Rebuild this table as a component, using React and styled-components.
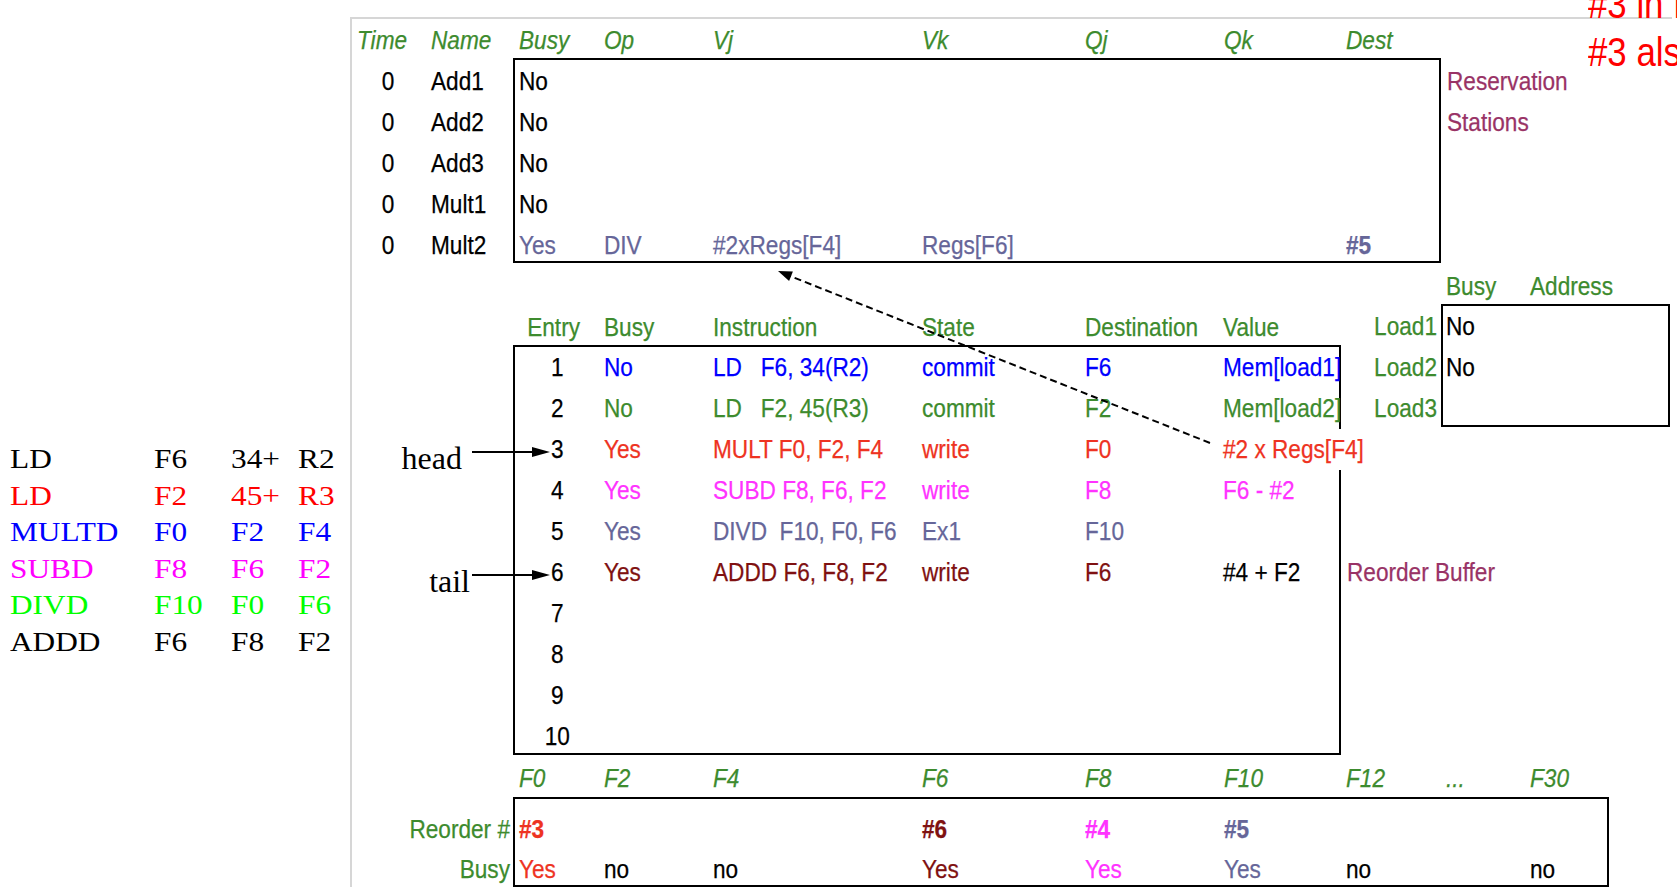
import React from 'react';
import styled, { createGlobalStyle } from 'styled-components';

const C = {
  green: '#3d8b2e',
  plum: '#993366',
  slate: '#666699',
  blue: '#0000ff',
  red: '#ee3322',
  magenta: '#ff33ff',
  maroon: '#7f1111',
  black: '#000000',
  grey: '#d6d6d6',
};

const BOXCOLS = '85px 109px 209px 163px 139px 122px 93px';
const ROBCOLS = '89px 109px 209px 163px 138px 116px';
const REGCOLS = '85px 109px 209px 163px 139px 122px 100px 84px 1fr';

const Global = createGlobalStyle`
  html, body { margin: 0; padding: 0; background: #fff; }
  body { font-family: "Liberation Sans", Arial, sans-serif; }
`;

const Page = styled.div`
  position: relative;
  width: 1677px;
  height: 896px;
  overflow: hidden;
  display: flex;
  align-items: flex-start;
  background: #fff;
  font-family: "Liberation Sans", Arial, sans-serif;
  font-size: 26px;
  color: #000;
`;

const ProgramList = styled.div`
  width: 350px;
  flex-shrink: 0;
  box-sizing: border-box;
  padding: 441px 0 0 10px;
  display: grid;
  grid-template-columns: 144px 77px 67px auto;
  grid-auto-rows: 36.6px;
  font-family: "Liberation Serif", "Times New Roman", serif;
  font-size: 27px;
  line-height: 36.6px;
`;

const ProgCell = styled.div`
  color: ${(p) => p.$c};
  white-space: nowrap;
  transform: scaleX(1.16);
  transform-origin: left center;
`;

const Panel = styled.div`
  margin-top: 17px;
  width: 1322px;
  height: 870px;
  flex-shrink: 0;
  box-sizing: border-box;
  border-top: 2px solid ${C.grey};
  border-left: 2px solid ${C.grey};
  display: flex;
  flex-direction: column;
  -webkit-text-stroke: 0.25px currentColor;
`;

/* narrow, tall text cell used everywhere in the tables */
const Cell = styled.div`
  color: ${(p) => p.$c || 'inherit'};
  font-weight: ${(p) => (p.$bold ? 700 : 400)};
  text-align: ${(p) => p.$align || 'left'};
  white-space: pre;
  transform: scaleX(0.87);
  transform-origin: ${(p) => p.$align || 'left'} center;
`;

/* ---------- Reservation stations ---------- */
const RSHeader = styled.div`
  margin-top: 4px;
  height: 35px;
  line-height: 35px;
  padding-left: 5px;
  display: grid;
  grid-template-columns: 74px 88px ${BOXCOLS};
  font-style: italic;
  color: ${C.green};
`;

const Row = styled.div`
  display: flex;
  align-items: flex-start;
  height: ${(p) => p.$h}px;
`;

const RSNames = styled.div`
  width: 161px;
  flex-shrink: 0;
  box-sizing: border-box;
  padding: 3px 0 0 5px;
  display: grid;
  grid-template-columns: 62px 82px;
  column-gap: 12px;
  grid-auto-rows: 41px;
  line-height: 41px;
`;

const TableBox = styled.div`
  width: ${(p) => p.$w}px;
  height: ${(p) => p.$h}px;
  flex-shrink: 0;
  box-sizing: border-box;
  border: 2px solid #000;
  padding: ${(p) => p.$pad};
  display: grid;
  grid-template-columns: ${(p) => p.$cols};
  grid-auto-rows: ${(p) => p.$rowH}px;
  line-height: ${(p) => p.$rowH}px;
  align-content: start;
`;

const SideLabels = styled.div`
  padding: ${(p) => p.$pad};
  display: grid;
  grid-auto-rows: 41px;
  line-height: 41px;
  color: ${C.plum};
`;

/* ---------- Reorder buffer + load buffers ---------- */
const Gutter = styled.div`
  width: 161px;
  flex-shrink: 0;
  box-sizing: border-box;
  padding-top: 84px;
  display: grid;
  grid-template-rows: repeat(10, 41px);
`;

const Pointer = styled.div`
  grid-row: ${(p) => p.$row};
  display: flex;
  align-items: center;
  justify-content: flex-end;
  gap: ${(p) => p.$gap}px;
  margin-right: -37px;
  position: relative;
  z-index: 1;
`;

const PointerLabel = styled.span`
  font-family: "Liberation Serif", "Times New Roman", serif;
  font-size: 32px;
  line-height: 32px;
  margin-top: 17px;
  -webkit-text-stroke: 0;
`;

const PointerArrow = styled.svg`
  display: block;
  margin-top: 5px;
  flex-shrink: 0;
`;

const ROBCol = styled.div`
  width: 828px;
  flex-shrink: 0;
  box-sizing: border-box;
  padding-top: 46px;
`;

const ROBHeader = styled.div`
  height: 36px;
  line-height: 36px;
  padding-left: 2px;
  display: grid;
  grid-template-columns: ${ROBCOLS};
  color: ${C.green};
`;

const EntryHead = styled(Cell)`
  padding-left: 14px;
`;

const EntryCell = styled(Cell)`
  padding-right: 5px;
`;

const ValueCell = styled(Cell)`
  justify-self: start;
  width: max-content;
  background: ${(p) => (p.$over ? '#fff' : 'transparent')};
  position: relative;
`;

const Side = styled.div`
  width: 331px;
  flex-shrink: 0;
  display: flex;
  flex-direction: column;
`;

const LoadHeader = styled.div`
  margin-top: 6px;
  height: 35px;
  line-height: 35px;
  padding-left: 105px;
  display: grid;
  grid-template-columns: 84px auto;
  color: ${C.green};
`;

const LoadLabels = styled.div`
  width: 100px;
  flex-shrink: 0;
  box-sizing: border-box;
  padding: 2px 4px 0 0;
  display: grid;
  grid-auto-rows: 41px;
  line-height: 41px;
  color: ${C.green};
`;

/* ---------- Register status ---------- */
const RegHeader = styled.div`
  margin-top: 5px;
  height: 37px;
  line-height: 37px;
  padding-left: 167px;
  display: grid;
  grid-template-columns: ${REGCOLS};
  font-style: italic;
  color: ${C.green};
`;

const RegLabels = styled.div`
  width: 161px;
  flex-shrink: 0;
  box-sizing: border-box;
  padding: 12px 3px 0 0;
  display: grid;
  grid-auto-rows: 40px;
  line-height: 40px;
  color: ${C.green};
`;

/* ---------- overlays ---------- */
const Note = styled.div`
  position: absolute;
  left: 1588px;
  top: -20px;
  font-size: 40px;
  line-height: 48px;
  color: #ff0000;
  white-space: nowrap;
  transform: scaleX(0.87);
  transform-origin: left center;
`;

const Overlay = styled.svg`
  position: absolute;
  left: 0;
  top: 0;
  pointer-events: none;
`;

const program = [
  ['LD', 'F6', '34+', 'R2', '#000000'],
  ['LD', 'F2', '45+', 'R3', '#ff0000'],
  ['MULTD', 'F0', 'F2', 'F4', '#0000ff'],
  ['SUBD', 'F8', 'F6', 'F2', '#ff00ff'],
  ['DIVD', 'F10', 'F0', 'F6', '#00ff00'],
  ['ADDD', 'F6', 'F8', 'F2', '#000000'],
];

const rsRows = [
  { name: 'Add1', c: '#000', cells: ['No'] },
  { name: 'Add2', c: '#000', cells: ['No'] },
  { name: 'Add3', c: '#000', cells: ['No'] },
  { name: 'Mult1', c: '#000', cells: ['No'] },
  { name: 'Mult2', c: C.slate, cells: ['Yes', 'DIV', '#2xRegs[F4]', 'Regs[F6]', '', '', '#5'] },
];

const rob = [
  { c: C.blue, busy: 'No', ins: 'LD   F6, 34(R2)', st: 'commit', dst: 'F6', val: 'Mem[load1]' },
  { c: C.green, busy: 'No', ins: 'LD   F2, 45(R3)', st: 'commit', dst: 'F2', val: 'Mem[load2]' },
  { c: C.red, busy: 'Yes', ins: 'MULT F0, F2, F4', st: 'write', dst: 'F0', val: '#2 x Regs[F4]', over: true },
  { c: C.magenta, busy: 'Yes', ins: 'SUBD F8, F6, F2', st: 'write', dst: 'F8', val: 'F6 - #2' },
  { c: C.slate, busy: 'Yes', ins: 'DIVD  F10, F0, F6', st: 'Ex1', dst: 'F10', val: '' },
  { c: C.maroon, busy: 'Yes', ins: 'ADDD F6, F8, F2', st: 'write', dst: 'F6', val: '#4 + F2', valC: '#000' },
  {}, {}, {}, {},
];

const regCols = ['F0', 'F2', 'F4', 'F6', 'F8', 'F10', 'F12', '...', 'F30'];
const regReorder = [['#3', C.red], null, null, ['#6', C.maroon], ['#4', C.magenta], ['#5', C.slate], null, null, null];
const regBusy = [['Yes', C.red], ['no'], ['no'], ['Yes', C.maroon], ['Yes', C.magenta], ['Yes', C.slate], ['no'], null, ['no']];

function Arrow() {
  return (
    <PointerArrow width="78" height="12" viewBox="0 0 78 12">
      <line x1="0" y1="6" x2="64" y2="6" stroke="#000" strokeWidth="2" />
      <polygon points="60,1 78,6 60,11" fill="#000" />
    </PointerArrow>
  );
}

export default function App() {
  return (
    <>
      <Global />
      <Page>
        <ProgramList>
          {program.map((r, i) =>
            r.slice(0, 4).map((t, j) => (
              <ProgCell key={`${i}-${j}`} $c={r[4]}>{t}</ProgCell>
            ))
          )}
        </ProgramList>

        <Panel>
          <RSHeader>
            {['Time', 'Name', 'Busy', 'Op', 'Vj', 'Vk', 'Qj', 'Qk', 'Dest'].map((h) => (
              <Cell key={h}>{h}</Cell>
            ))}
          </RSHeader>
          <Row $h={205}>
            <RSNames>
              {rsRows.map((r) => (
                <React.Fragment key={r.name}>
                  <Cell $align="center">0</Cell>
                  <Cell>{r.name}</Cell>
                </React.Fragment>
              ))}
            </RSNames>
            <TableBox $w={928} $h={205} $pad="1px 0 0 4px" $cols={BOXCOLS} $rowH={41}>
              {rsRows.map((r) =>
                Array.from({ length: 7 }).map((_, j) => (
                  <Cell key={`${r.name}-${j}`} $c={r.c} $bold={(r.cells[j] || '').startsWith('#5')}>
                    {r.cells[j] || ''}
                  </Cell>
                ))
              )}
            </TableBox>
            <SideLabels $pad="3px 0 0 6px">
              <Cell>Reservation</Cell>
              <Cell>Stations</Cell>
            </SideLabels>
          </Row>

          <Row $h={492}>
            <Gutter>
              <Pointer $row={3} $gap={10}>
                <PointerLabel>head</PointerLabel>
                <Arrow />
              </Pointer>
              <Pointer $row={6} $gap={2}>
                <PointerLabel>tail</PointerLabel>
                <Arrow />
              </Pointer>
            </Gutter>
            <ROBCol>
              <ROBHeader>
                <EntryHead>Entry</EntryHead>
                <Cell>Busy</Cell>
                <Cell>Instruction</Cell>
                <Cell>State</Cell>
                <Cell>Destination</Cell>
                <Cell>Value</Cell>
              </ROBHeader>
              <TableBox $w={828} $h={410} $pad="0" $cols={ROBCOLS} $rowH={41}>
                {rob.map((r, i) => (
                  <React.Fragment key={i}>
                    <EntryCell $align="center">{i + 1}</EntryCell>
                    <Cell $c={r.c}>{r.busy || ''}</Cell>
                    <Cell $c={r.c}>{r.ins || ''}</Cell>
                    <Cell $c={r.c}>{r.st || ''}</Cell>
                    <Cell $c={r.c}>{r.dst || ''}</Cell>
                    <ValueCell $c={r.valC || r.c} $over={r.over}>{r.val || ''}</ValueCell>
                  </React.Fragment>
                ))}
              </TableBox>
            </ROBCol>
            <Side>
              <LoadHeader>
                <Cell>Busy</Cell>
                <Cell>Address</Cell>
              </LoadHeader>
              <Row $h={123}>
                <LoadLabels>
                  <Cell $align="right">Load1</Cell>
                  <Cell $align="right">Load2</Cell>
                  <Cell $align="right">Load3</Cell>
                </LoadLabels>
                <TableBox $w={229} $h={123} $pad="0 0 0 3px" $cols="84px 1fr" $rowH={41}>
                  <Cell>No</Cell>
                  <Cell />
                  <Cell>No</Cell>
                  <Cell />
                </TableBox>
              </Row>
              <SideLabels $pad="125px 0 0 6px">
                <Cell>Reorder Buffer</Cell>
              </SideLabels>
            </Side>
          </Row>

          <RegHeader>
            {regCols.map((h) => (
              <Cell key={h}>{h}</Cell>
            ))}
          </RegHeader>
          <Row $h={90}>
            <RegLabels>
              <Cell $align="right">Reorder #</Cell>
              <Cell $align="right">Busy</Cell>
            </RegLabels>
            <TableBox $w={1096} $h={90} $pad="10px 0 0 4px" $cols={REGCOLS} $rowH={40}>
              {regReorder.map((v, i) => (
                <Cell key={`r${i}`} $c={v ? v[1] : '#000'} $bold>{v ? v[0] : ''}</Cell>
              ))}
              {regBusy.map((v, i) => (
                <Cell key={`b${i}`} $c={v && v[1] ? v[1] : '#000'}>{v ? v[0] : ''}</Cell>
              ))}
            </TableBox>
          </Row>
        </Panel>

        <Note>
          <div>#3 in ROB</div>
          <div>#3 also</div>
        </Note>

        <Overlay width="1677" height="896" viewBox="0 0 1677 896">
          <line x1="1210" y1="443" x2="790" y2="276" stroke="#000" strokeWidth="2" strokeDasharray="7 4" />
          <polygon points="778,271 792.9,271.5 789.1,280.9" fill="#000" />
        </Overlay>
      </Page>
    </>
  );
}
